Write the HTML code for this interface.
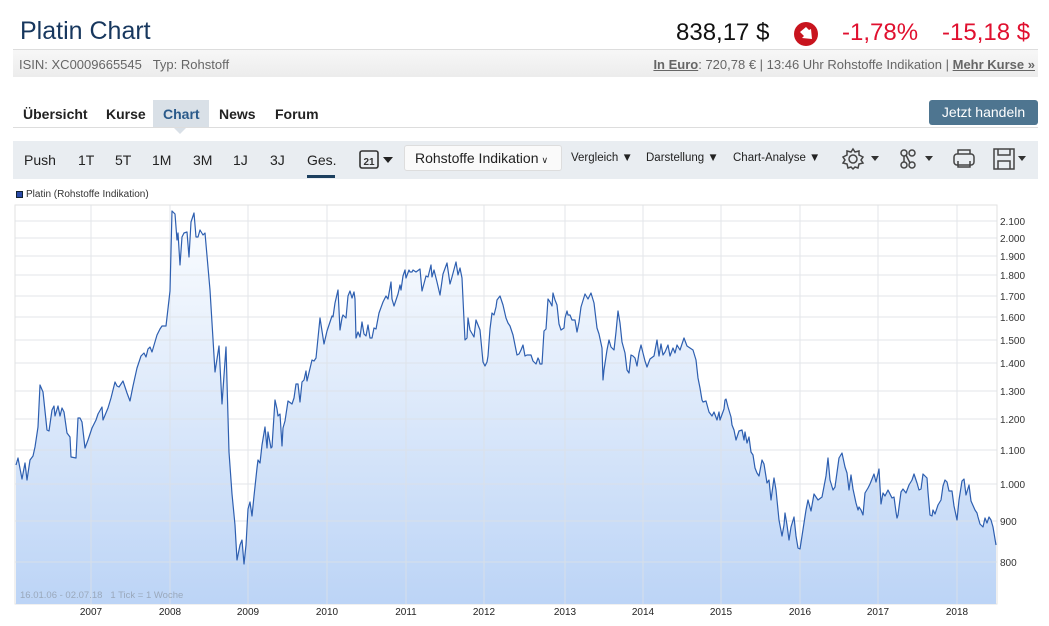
<!DOCTYPE html>
<html><head><meta charset="utf-8"><style>
*{margin:0;padding:0;box-sizing:border-box}
body{width:1049px;height:626px;background:#fff;font-family:"Liberation Sans",sans-serif;position:relative;overflow:hidden}
.a{position:absolute;white-space:nowrap}
</style></head><body>
<div class="a" style="left:20px;top:17px;font-size:25px;color:#17375e">Platin Chart</div>
<div class="a" style="left:676px;top:19px;font-size:24px;color:#111">838,17 $</div>
<svg class="a" style="left:793px;top:21px" width="26" height="26" viewBox="0 0 26 26"><circle cx="13" cy="13" r="12" fill="#c8141e"/><path d="M7 11 L13 6 L16 9 L18 8 L19 18 L9 17 L11 15 Z" fill="#fff"/></svg>
<div class="a" style="left:842px;top:19px;font-size:24px;color:#e0102f">-1,78%</div>
<div class="a" style="left:942px;top:19px;font-size:24px;color:#e0102f">-15,18 $</div>
<div class="a" style="left:13px;top:49px;width:1025px;height:28px;border-top:1px solid #ddd;background:linear-gradient(#f7f7f7,#ececec)"></div>
<div class="a" style="left:19px;top:57px;font-size:13px;color:#666">ISIN: XC0009665545 &nbsp;&nbsp;Typ: Rohstoff</div>
<div class="a" style="right:14px;top:57px;font-size:13px;color:#666"><b style="text-decoration:underline">In Euro</b>: 720,78 € | 13:46 Uhr Rohstoffe Indikation | <b style="text-decoration:underline">Mehr Kurse »</b></div>
<div class="a" style="left:153px;top:100px;width:56px;height:27px;background:#d9e0e7"></div>
<div class="a" style="left:173px;top:127px;width:0;height:0;border-left:7px solid transparent;border-right:7px solid transparent;border-top:7px solid #d9e0e7"></div>
<div class="a" style="left:13px;top:127px;width:1025px;height:1px;background:#ddd"></div>
<div class="a" style="left:23px;top:106px;font-size:14px;font-weight:bold;color:#222">Übersicht</div>
<div class="a" style="left:106px;top:106px;font-size:14px;font-weight:bold;color:#222">Kurse</div>
<div class="a" style="left:163px;top:106px;font-size:14px;font-weight:bold;color:#2a5a8a">Chart</div>
<div class="a" style="left:219px;top:106px;font-size:14px;font-weight:bold;color:#222">News</div>
<div class="a" style="left:275px;top:106px;font-size:14px;font-weight:bold;color:#222">Forum</div>
<div class="a" style="left:929px;top:100px;width:109px;height:25px;background:#4e7590;border-radius:3px;color:#fff;font-size:14px;text-align:center;line-height:25px">Jetzt handeln</div>
<div class="a" style="left:13px;top:141px;width:1025px;height:38px;background:#e9edf1"></div>
<div class="a" style="top:152px;left:24px;font-size:14px;color:#222">Push</div>
<div class="a" style="top:152px;left:78px;font-size:14px;color:#222">1T</div>
<div class="a" style="top:152px;left:115px;font-size:14px;color:#222">5T</div>
<div class="a" style="top:152px;left:152px;font-size:14px;color:#222">1M</div>
<div class="a" style="top:152px;left:193px;font-size:14px;color:#222">3M</div>
<div class="a" style="top:152px;left:233px;font-size:14px;color:#222">1J</div>
<div class="a" style="top:152px;left:270px;font-size:14px;color:#222">3J</div>
<div class="a" style="top:152px;left:307px;font-size:14px;color:#222">Ges.</div>
<div class="a" style="left:307px;top:175px;width:28px;height:3px;background:#1c3f5e"></div>
<svg class="a" style="left:358px;top:147px" width="40" height="24"><rect x="2" y="4" width="18" height="17" rx="2" fill="none" stroke="#333" stroke-width="1.6"/><text x="11" y="18" font-size="10" font-weight="bold" text-anchor="middle" font-family="Liberation Sans" fill="#333">21</text><path d="M25 10 L35 10 L30 16Z" fill="#222"/></svg>
<div class="a" style="left:404px;top:145px;width:158px;height:26px;background:#fafafa;border:1px solid #ddd;border-radius:3px;font-size:14px;color:#222;padding:4px 0 0 10px">Rohstoffe Indikation<span style="font-size:9px;margin-left:3px">&#8744;</span></div>
<div class="a" style="left:571px;top:152px;font-size:11.5px;color:#222">Vergleich ▼</div>
<div class="a" style="left:646px;top:152px;font-size:11.5px;color:#222">Darstellung ▼</div>
<div class="a" style="left:733px;top:152px;font-size:11.5px;color:#222">Chart-Analyse ▼</div>
<svg class="a" style="left:840px;top:146px" width="200" height="26" fill="none" stroke="#444" stroke-width="1.5">
<circle cx="13" cy="13" r="4"/><path d="M13 3 L15 6 L19 5 L19 9 L23 11 L21 14 L23 17 L19 18 L18 22 L15 21 L13 23 L11 21 L8 22 L7 18 L3 17 L5 14 L3 11 L7 9 L7 5 L11 6 Z"/>
<path d="M31 10 L39 10 L35 15Z" fill="#333" stroke="none"/>
<circle cx="64" cy="7" r="3"/><circle cx="72" cy="7" r="3"/><circle cx="64" cy="19" r="3"/><circle cx="72" cy="19" r="3"/><path d="M64 10 L64 16 M66 9 L70 17"/>
<path d="M85 10 L93 10 L89 15Z" fill="#333" stroke="none"/>
<rect x="114" y="8" width="20" height="11" rx="3"/><path d="M118 8 V4 H130 V8 M118 15 V21 H130 V15"/>
<rect x="154" y="3" width="20" height="20"/><path d="M158 3 V9 H170 V3 M158 23 V15 H170 V23"/>
<path d="M178 10 L186 10 L182 15Z" fill="#333" stroke="none"/>
</svg>
<div class="a" style="left:16px;top:191px;width:7px;height:7px;background:#2a4aa8;border:1px solid #123"></div>
<div class="a" style="left:26px;top:189px;font-size:10px;color:#333">Platin (Rohstoffe Indikation)</div>
<svg class="a" style="left:0;top:0" width="1049" height="626">
<defs><linearGradient id="g" x1="0" y1="205" x2="0" y2="604" gradientUnits="userSpaceOnUse"><stop offset="0" stop-color="#fdfeff"/><stop offset="1" stop-color="#bcd4f6"/></linearGradient></defs>
<rect x="15" y="205" width="982" height="399" fill="#fff" stroke="#e2e2e2"/>
<polygon fill="url(#g)" points="16,604 16,465 18,458 22,479 25,463 27,480 30,460 33,456 35,447 38,427 40,385 43,392 47,430 49,431 52,410 54,406 55,416 58,406 60,416 62,408 64,412 67,433 70,437 71,457 76,458 78,418 80,418 82,422 85,448 88,440 92,428 96,420 98,414 102,407 103,420 108,408 111,398 115,382 117,386 119,387 123,381 127,393 130,401 133,386 137,368 141,356 144,353 146,357 148,349 150,347 152,352 157,335 160,329 162,326 166,326 170,291 172,211 175,214 177,240 178,233 180,265 182,237 184,233 187,232 189,257 191,222 194,213 196,237 198,237 200,230 203,235 205,233 210,290 215,372 219,346 222,404 226,347 229,452 232,494 235,525 237,560 240,545 242,540 244,564 246,545 248,509 250,502 252,516 254,496 257,468 258,460 260,463 262,445 265,427 267,448 268,432 271,448 272,447 273,431 275,400 277,409 278,416 280,414 282,446 283,428 285,421 288,401 292,404 294,398 296,384 298,384 300,402 302,382 304,380 306,371 307,381 312,360 314,361 316,358 317,348 320,318 322,331 324,344 327,331 330,322 332,316 333,317 335,303 338,290 340,330 342,318 343,315 346,318 348,296 350,291 352,298 354,292 355,299 356,338 358,332 360,337 362,322 364,334 366,336 368,325 370,338 372,338 374,328 376,329 379,313 383,302 386,296 388,299 391,282 392,299 394,306 396,300 398,294 400,285 401,290 403,276 405,270 406,278 409,270 410,272 412,272 413,270 416,272 420,269 422,291 426,276 428,277 431,265 432,277 434,270 437,282 440,295 443,274 447,263 450,284 452,277 456,262 458,275 460,268 462,278 464,320 465,340 467,338 468,318 470,330 474,337 476,320 480,330 483,362 485,366 487,362 488,356 490,329 492,313 494,315 496,307 497,300 500,296 503,305 506,318 508,323 510,326 513,335 515,345 517,355 519,354 521,350 523,345 525,356 527,355 531,355 533,361 536,364 538,358 539,360 540,364 542,364 544,331 546,329 548,299 550,302 552,306 553,293 555,300 557,305 559,324 561,330 564,328 565,318 567,311 568,315 570,315 572,320 575,320 577,332 579,322 581,307 585,294 588,299 591,293 594,303 597,328 599,334 602,348 603,380 604,370 607,350 609,340 611,347 614,350 616,332 618,311 620,323 622,342 625,353 627,370 629,373 631,355 633,356 635,358 637,366 639,353 641,345 643,353 645,361 647,367 650,359 654,356 657,340 659,356 661,344 663,355 665,352 668,345 670,356 673,348 675,353 677,345 680,350 684,338 687,346 690,348 693,350 696,360 698,378 700,388 702,400 703,402 706,401 709,412 712,416 714,412 717,420 719,412 720,420 724,409 725,400 726,399 728,407 731,417 732,425 734,430 736,440 737,437 739,431 742,430 744,440 745,432 747,443 749,437 751,452 753,455 755,468 757,473 759,476 762,460 764,464 767,483 769,480 771,500 774,478 776,490 777,500 779,520 782,536 784,525 785,513 787,525 789,540 791,527 794,517 796,536 798,548 800,549 806,510 808,500 811,511 814,494 818,500 822,497 826,476 828,458 830,480 833,490 835,487 839,458 842,453 845,467 847,473 849,490 851,475 853,489 856,503 858,510 859,507 861,510 863,515 865,493 868,488 870,484 874,474 876,482 879,469 881,504 883,493 885,496 888,490 892,498 894,497 896,512 897,518 898,515 901,492 903,489 906,493 909,485 912,480 914,474 917,483 919,490 921,489 923,474 927,478 928,492 930,515 932,516 933,510 935,514 938,505 941,500 943,486 945,480 947,482 949,491 952,491 954,506 957,520 959,500 962,481 964,479 966,495 969,485 971,501 975,510 977,513 978,517 980,524 983,527 985,518 987,523 989,517 991,520 993,527 996,545 996,604"/>
<g stroke="#dde1e6" stroke-width="1" opacity="0.8">
<path d="M15 221H997M15 238H997M15 256H997M15 275H997M15 296H997M15 317H997M15 340H997M15 363H997M15 391H997M15 419H997M15 450H997M15 484H997M15 521H997M15 562H997"/>
<path d="M91 205V604M170 205V604M248 205V604M327 205V604M406 205V604M484 205V604M565 205V604M643 205V604M721 205V604M800 205V604M878 205V604M957 205V604"/>
</g>
<polyline fill="none" stroke="#2e5fb0" stroke-width="1.2" stroke-linejoin="round" points="16,465 18,458 22,479 25,463 27,480 30,460 33,456 35,447 38,427 40,385 43,392 47,430 49,431 52,410 54,406 55,416 58,406 60,416 62,408 64,412 67,433 70,437 71,457 76,458 78,418 80,418 82,422 85,448 88,440 92,428 96,420 98,414 102,407 103,420 108,408 111,398 115,382 117,386 119,387 123,381 127,393 130,401 133,386 137,368 141,356 144,353 146,357 148,349 150,347 152,352 157,335 160,329 162,326 166,326 170,291 172,211 175,214 177,240 178,233 180,265 182,237 184,233 187,232 189,257 191,222 194,213 196,237 198,237 200,230 203,235 205,233 210,290 215,372 219,346 222,404 226,347 229,452 232,494 235,525 237,560 240,545 242,540 244,564 246,545 248,509 250,502 252,516 254,496 257,468 258,460 260,463 262,445 265,427 267,448 268,432 271,448 272,447 273,431 275,400 277,409 278,416 280,414 282,446 283,428 285,421 288,401 292,404 294,398 296,384 298,384 300,402 302,382 304,380 306,371 307,381 312,360 314,361 316,358 317,348 320,318 322,331 324,344 327,331 330,322 332,316 333,317 335,303 338,290 340,330 342,318 343,315 346,318 348,296 350,291 352,298 354,292 355,299 356,338 358,332 360,337 362,322 364,334 366,336 368,325 370,338 372,338 374,328 376,329 379,313 383,302 386,296 388,299 391,282 392,299 394,306 396,300 398,294 400,285 401,290 403,276 405,270 406,278 409,270 410,272 412,272 413,270 416,272 420,269 422,291 426,276 428,277 431,265 432,277 434,270 437,282 440,295 443,274 447,263 450,284 452,277 456,262 458,275 460,268 462,278 464,320 465,340 467,338 468,318 470,330 474,337 476,320 480,330 483,362 485,366 487,362 488,356 490,329 492,313 494,315 496,307 497,300 500,296 503,305 506,318 508,323 510,326 513,335 515,345 517,355 519,354 521,350 523,345 525,356 527,355 531,355 533,361 536,364 538,358 539,360 540,364 542,364 544,331 546,329 548,299 550,302 552,306 553,293 555,300 557,305 559,324 561,330 564,328 565,318 567,311 568,315 570,315 572,320 575,320 577,332 579,322 581,307 585,294 588,299 591,293 594,303 597,328 599,334 602,348 603,380 604,370 607,350 609,340 611,347 614,350 616,332 618,311 620,323 622,342 625,353 627,370 629,373 631,355 633,356 635,358 637,366 639,353 641,345 643,353 645,361 647,367 650,359 654,356 657,340 659,356 661,344 663,355 665,352 668,345 670,356 673,348 675,353 677,345 680,350 684,338 687,346 690,348 693,350 696,360 698,378 700,388 702,400 703,402 706,401 709,412 712,416 714,412 717,420 719,412 720,420 724,409 725,400 726,399 728,407 731,417 732,425 734,430 736,440 737,437 739,431 742,430 744,440 745,432 747,443 749,437 751,452 753,455 755,468 757,473 759,476 762,460 764,464 767,483 769,480 771,500 774,478 776,490 777,500 779,520 782,536 784,525 785,513 787,525 789,540 791,527 794,517 796,536 798,548 800,549 806,510 808,500 811,511 814,494 818,500 822,497 826,476 828,458 830,480 833,490 835,487 839,458 842,453 845,467 847,473 849,490 851,475 853,489 856,503 858,510 859,507 861,510 863,515 865,493 868,488 870,484 874,474 876,482 879,469 881,504 883,493 885,496 888,490 892,498 894,497 896,512 897,518 898,515 901,492 903,489 906,493 909,485 912,480 914,474 917,483 919,490 921,489 923,474 927,478 928,492 930,515 932,516 933,510 935,514 938,505 941,500 943,486 945,480 947,482 949,491 952,491 954,506 957,520 959,500 962,481 964,479 966,495 969,485 971,501 975,510 977,513 978,517 980,524 983,527 985,518 987,523 989,517 991,520 993,527 996,545"/>
<g font-family="Liberation Sans" font-size="10" fill="#333">
<text x="1000" y="225">2.100</text><text x="1000" y="242">2.000</text><text x="1000" y="260">1.900</text><text x="1000" y="279">1.800</text><text x="1000" y="300">1.700</text><text x="1000" y="321">1.600</text><text x="1000" y="344">1.500</text><text x="1000" y="367">1.400</text><text x="1000" y="395">1.300</text><text x="1000" y="423">1.200</text><text x="1000" y="454">1.100</text><text x="1000" y="488">1.000</text><text x="1000" y="525">900</text><text x="1000" y="566">800</text>
</g>
<g font-family="Liberation Sans" font-size="10" fill="#222" text-anchor="middle">
<text x="91" y="615">2007</text><text x="170" y="615">2008</text><text x="248" y="615">2009</text><text x="327" y="615">2010</text><text x="406" y="615">2011</text><text x="484" y="615">2012</text><text x="565" y="615">2013</text><text x="643" y="615">2014</text><text x="721" y="615">2015</text><text x="800" y="615">2016</text><text x="878" y="615">2017</text><text x="957" y="615">2018</text>
</g>
<text x="20" y="598" font-family="Liberation Sans" font-size="9.5" fill="#9aa8bb">16.01.06 - 02.07.18 &#160;&#160;1 Tick = 1 Woche</text>
</svg>
</body></html>
